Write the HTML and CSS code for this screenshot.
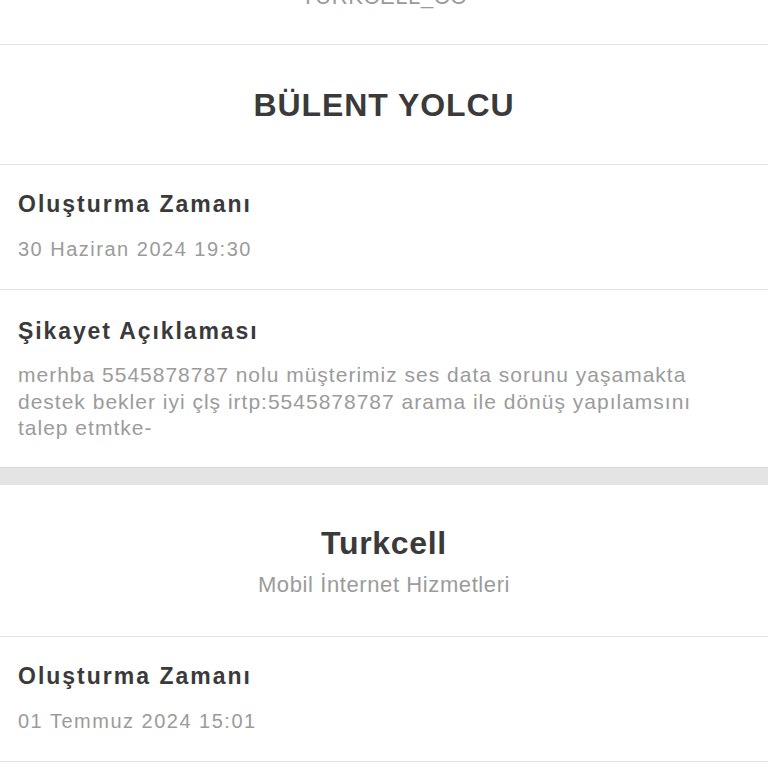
FILE: index.html
```html
<!DOCTYPE html>
<html lang="tr">
<head>
  <meta charset="UTF-8" />
  <meta name="viewport" content="width=device-width, initial-scale=1.0"/>
  <title>Şikayet Detayı</title>
  <link rel="stylesheet" href="styles.css">
</head>
<body>

  <div class="card">
    <!-- scrolled-off header -->
    <section class="store">
      <div class="store-name">TURKCELL_CC</div>
    </section>

    <section class="person">
      <h2>BÜLENT YOLCU</h2>
    </section>

    <div class="row">
      <div class="label">Oluşturma Zamanı</div>
      <div class="value">30 Haziran 2024 19:30</div>
    </div>

    <div class="row desc">
      <div class="label">Şikayet Açıklaması</div>
      <div class="value">merhba 5545878787 nolu müşterimiz ses data sorunu yaşamakta destek bekler iyi çlş irtp:5545878787 arama ile dönüş yapılamsını talep etmtke-</div>
    </div>
  </div>

  <div class="spacer"></div>

  <div class="card">
    <section class="company">
      <h2>Turkcell</h2>
      <div class="company-sub">Mobil İnternet Hizmetleri</div>
    </section>

    <div class="row">
      <div class="label">Oluşturma Zamanı</div>
      <div class="value">01 Temmuz 2024 15:01</div>
    </div>
  </div>

</body>
</html>
```

FILE: styles.css
```css
body {
  font-family: 'Liberation Sans', Arial, sans-serif;
  margin: 0;
  background: #ffffff;
  color: #3a3a3a;
}

.card {
  background: #ffffff;
}

.store {
  padding-bottom: 33px;
  border-bottom: 1px solid #e3e3e3;
  text-align: center;
}

.store-name {
  margin-top: -17px;
  font-size: 22px;
  line-height: 28px;
  letter-spacing: 0.6px;
  color: #9a9a9a;
}

.person {
  height: 119px;
  display: flex;
  align-items: center;
  justify-content: center;
  border-bottom: 1px solid #e3e3e3;
}

.person h2,
.company h2 {
  margin: 0;
  font-size: 32px;
  line-height: 38px;
  font-weight: bold;
  color: #3a3a3a;
}

.person h2 {
  letter-spacing: 0.9px;
}

.company h2 {
  letter-spacing: 0.7px;
}

.row {
  padding: 25px 18px 27px;
  border-bottom: 1px solid #e3e3e3;
}

.label {
  font-size: 23px;
  line-height: 28px;
  font-weight: bold;
  letter-spacing: 2px;
  color: #3a3a3a;
}

.value {
  margin-top: 18px;
  font-size: 20px;
  line-height: 26px;
  letter-spacing: 1.5px;
  color: #9b9b9b;
}

.desc {
  padding-top: 27px;
  padding-bottom: 25px;
  border-bottom: 1px solid #d6d6d6;
}

.desc .label {
  letter-spacing: 1.9px;
}

.desc .value {
  max-width: 705px;
  margin-top: 17px;
  font-size: 21px;
  line-height: 26.5px;
  letter-spacing: 1px;
}

.spacer {
  height: 17px;
  background: #e4e4e4;
}

.company {
  padding: 39px 18px 37px;
  border-bottom: 1px solid #e3e3e3;
  text-align: center;
}

.company-sub {
  margin-top: 9px;
  font-size: 22px;
  line-height: 28px;
  letter-spacing: 0.6px;
  color: #9b9b9b;
}
```
